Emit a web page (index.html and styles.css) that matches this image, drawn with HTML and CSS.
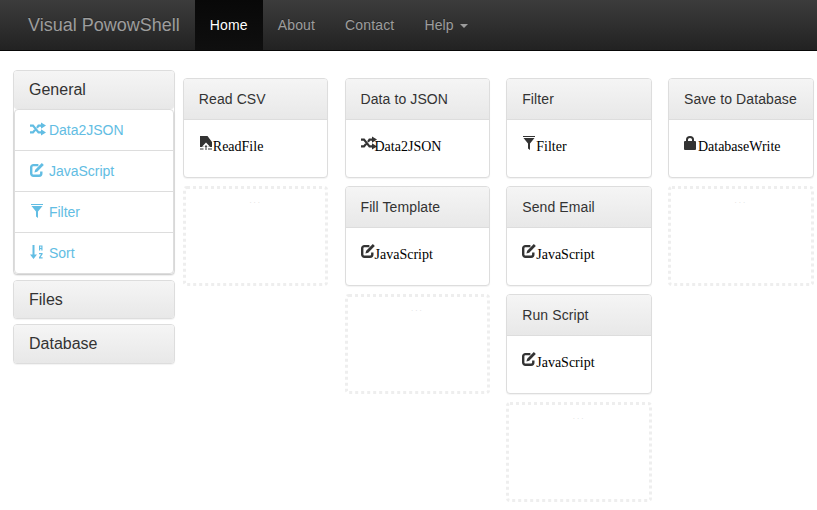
FILE: index.html
```html
<!DOCTYPE html>
<html lang="en">
<head>
    <meta charset="UTF-8">
    <title>Visual PowowShell</title>
    <link rel="stylesheet" href="styles.css">
</head>
<body>

    <!-- ICONS -->
    <svg class="icon-defs" xmlns="http://www.w3.org/2000/svg">
        <symbol id="i-shuffle" viewBox="0 0 16 14">
            <path d="M0 3.600h3l5.500 6.800h3M0 10.400h3l2-2.400M7 5.800l1.500-2.200h3" fill="none" stroke="currentColor" stroke-width="2.200"/>
            <path d="M11 .4l5 3.200-5 3.200zM11 7.200l5 3.200-5 3.200z" fill="currentColor"/>
        </symbol>
        <symbol id="i-edit" viewBox="0 0 14 14">
            <path d="M11.300 8.500v2a2.200 2.200 0 0 1-2.200 2.200H3.400a2.200 2.200 0 0 1-2.200-2.200V4.300a2.200 2.200 0 0 1 2.200-2.200h5" fill="none" stroke="currentColor" stroke-width="2.400"/>
            <path d="M11.800 0l2 2-6.600 6.800-2.800 .8 .8-2.800z" fill="currentColor"/>
        </symbol>
        <symbol id="i-filter" viewBox="0 0 14 14">
            <path d="M1 0h12v1H1zM1.500 2h11L8 7.500V14L6 12.500V7.500z" fill="currentColor"/>
        </symbol>
        <symbol id="i-sort" viewBox="0 0 14 14">
            <path d="M2.500 0h2v9.500H7L3.500 14 0 9.500h2.500z" fill="currentColor"/>
            <path d="M9 .5h3.500v5h-1.200V4H10.200v1.500H9zM10.200 1.500V3h1.100V1.500zM9 8h3.600v1.200L10.500 12.300h2.100v1.200H9v-1.200l2.100-3.100H9z" fill="currentColor"/>
        </symbol>
        <symbol id="i-import" viewBox="0 0 14 14">
            <path d="M1 0h7.500L13 6v5H1zM1 12.500h3.500v1H1zM9 12.500h4v1H9z" fill="currentColor"/>
            <path d="M7 6.500l4 4.200H9v3.300H5v-3.300H3z" fill="#fff"/>
            <path d="M7 9l1.500 1.800H7.500V14h-1v-3.200h-1z" fill="currentColor"/>
        </symbol>
        <symbol id="i-lock" viewBox="0 0 14 14">
            <path d="M1 5h10a1 1 0 0 1 1 1v7a1 1 0 0 1-1 1H1a1 1 0 0 1-1-1V6a1 1 0 0 1 1-1z" fill="currentColor"/>
            <path d="M3 6V3.500a3 2.500 0 0 1 6 0V6" fill="none" stroke="currentColor" stroke-width="2"/>
        </symbol>
    </svg>

    <!-- NAVBAR -->
    <nav class="navbar">
        <a class="brand" href="#">Visual PowowShell</a>
        <a class="nav-link active" href="#">Home</a>
        <a class="nav-link" href="#">About</a>
        <a class="nav-link" href="#">Contact</a>
        <a class="nav-link" href="#">Help <span class="caret"></span></a>
    </nav>

    <div class="page">

        <!-- SIDEBAR -->
        <aside class="sidebar">
            <div class="panel">
                <div class="side-heading">General</div>
                <ul class="list-group">
                    <li class="list-item"><svg class="icon icon-wide"><use href="#i-shuffle"/></svg> Data2JSON</li>
                    <li class="list-item"><svg class="icon"><use href="#i-edit"/></svg> JavaScript</li>
                    <li class="list-item"><svg class="icon"><use href="#i-filter"/></svg> Filter</li>
                    <li class="list-item"><svg class="icon"><use href="#i-sort"/></svg> Sort</li>
                </ul>
            </div>
            <div class="panel">
                <div class="side-heading">Files</div>
            </div>
            <div class="panel">
                <div class="side-heading">Database</div>
            </div>
        </aside>

        <!-- PIPELINE BOARD -->
        <main class="board">
            <div class="column">
                <div class="card">
                    <div class="card-heading">Read CSV</div>
                    <div class="card-body"><svg class="icon"><use href="#i-import"/></svg>ReadFile</div>
                </div>
                <div class="slot">...</div>
            </div>
            <div class="column">
                <div class="card">
                    <div class="card-heading">Data to JSON</div>
                    <div class="card-body"><svg class="icon icon-wide"><use href="#i-shuffle"/></svg>Data2JSON</div>
                </div>
                <div class="card">
                    <div class="card-heading">Fill Template</div>
                    <div class="card-body"><svg class="icon"><use href="#i-edit"/></svg>JavaScript</div>
                </div>
                <div class="slot">...</div>
            </div>
            <div class="column">
                <div class="card">
                    <div class="card-heading">Filter</div>
                    <div class="card-body"><svg class="icon"><use href="#i-filter"/></svg>Filter</div>
                </div>
                <div class="card">
                    <div class="card-heading">Send Email</div>
                    <div class="card-body"><svg class="icon"><use href="#i-edit"/></svg>JavaScript</div>
                </div>
                <div class="card">
                    <div class="card-heading">Run Script</div>
                    <div class="card-body"><svg class="icon"><use href="#i-edit"/></svg>JavaScript</div>
                </div>
                <div class="slot">...</div>
            </div>
            <div class="column">
                <div class="card">
                    <div class="card-heading">Save to Database</div>
                    <div class="card-body"><svg class="icon"><use href="#i-lock"/></svg>DatabaseWrite</div>
                </div>
                <div class="slot">...</div>
            </div>
        </main>

    </div>

</body>
</html>
```

FILE: styles.css
```css
body {
    margin: 0;
    background: #fff;
    color: #000;
    font-family: "Liberation Serif", serif;
    font-size: 14px;
    line-height: 20px;
}
.icon-defs {
    display: none;
}
.icon {
    display: inline-block;
    width: 14px;
    height: 14px;
    vertical-align: 1px;
    color: #333;
}
.icon-wide {
    width: 16px;
    margin-right: -2px;
}
.navbar {
    display: flex;
    align-items: stretch;
    height: 50px;
    padding-left: 13px;
    background: linear-gradient(to bottom, #3c3c3c, #222);
    border-bottom: 1px solid #080808;
    font-family: "Liberation Sans", sans-serif;
}
.brand {
    padding: 15px;
    color: #9d9d9d;
    font-size: 18px;
    text-decoration: none;
    text-shadow: 0 -1px 0 rgba(0, 0, 0, 0.25);
}
.nav-link {
    padding: 15px;
    color: #9d9d9d;
    letter-spacing: 0.15px;
    text-decoration: none;
    text-shadow: 0 -1px 0 rgba(0, 0, 0, 0.25);
}
.nav-link.active {
    background: linear-gradient(to bottom, #080808, #0f0f0f);
    color: #fff;
}
.caret {
    display: inline-block;
    margin-left: 2px;
    vertical-align: middle;
    border-top: 4px solid #9d9d9d;
    border-left: 4px solid transparent;
    border-right: 4px solid transparent;
}
.page {
    display: flex;
    align-items: flex-start;
    gap: 8px;
    padding: 19px 3.4px 0 13px;
}
.sidebar {
    flex: 0 0 162px;
    font-family: "Liberation Sans", sans-serif;
}
.panel {
    margin-bottom: 5px;
    border: 1px solid #ddd;
    border-radius: 4px;
    background: #fff;
    box-shadow: 0 1px 1px rgba(0, 0, 0, 0.05);
}
.side-heading {
    padding: 10px 15px;
    border-radius: 3px;
    background: linear-gradient(to bottom, #f5f5f5, #e8e8e8);
    color: #333;
    font-size: 16px;
    line-height: 17.6px;
}
.list-group {
    margin: 0;
    padding: 0;
    list-style: none;
    border: 1px solid #ddd;
    border-radius: 4px;
    box-shadow: 0 1px 2px rgba(0, 0, 0, 0.075);
}
.list-item {
    padding: 10px 15px;
    color: #62bde3;
    border-bottom: 1px solid #ddd;
}
.list-item:last-child {
    border-bottom: none;
}
.list-item .icon {
    margin-right: 1px;
    vertical-align: -1px;
    color: #62bde3;
}
.list-item .icon-wide {
    margin-right: -1px;
}
.board {
    flex: 1;
    display: grid;
    grid-template-columns: repeat(4, 1fr);
    column-gap: 16.25px;
    padding-top: 8px;
}
.card,
.slot {
    box-sizing: border-box;
    height: 100px;
    margin-bottom: 8px;
    border-radius: 4px;
}
.card {
    border: 1px solid #ddd;
    background: #fff;
    box-shadow: 0 1px 1px rgba(0, 0, 0, 0.05);
}
.card-heading {
    padding: 10px 15px 10px 14.8px;
    border-bottom: 1px solid #ddd;
    border-radius: 3px 3px 0 0;
    background: linear-gradient(to bottom, #f5f5f5, #e8e8e8);
    color: #333;
    font-family: "Liberation Sans", sans-serif;
    letter-spacing: 0.1px;
}
.card-body {
    padding: 16px 15px 14px 14.8px;
}
.slot {
    padding-top: 7px;
    border: 3px dotted #eee;
    color: #ddd;
    font-family: "Liberation Sans", sans-serif;
    font-size: 8px;
    line-height: 10px;
    letter-spacing: 2px;
    text-align: center;
}
```
